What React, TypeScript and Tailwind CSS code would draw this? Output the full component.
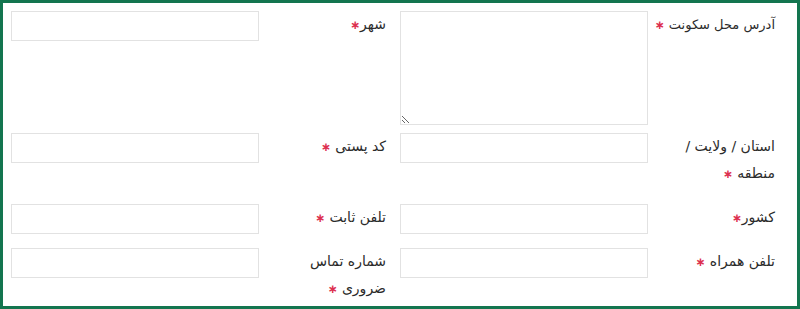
const Star = () => <span className="text-[12px] font-bold text-[#dc2f4f]">∗</span>;

function Field({
  label,
  tall,
}: {
  label: React.ReactNode;
  tall?: boolean;
}) {
  return (
    <div className="flex w-[389px] items-start">
      <label className="w-[141px] pr-[14px] text-[14px] leading-[27px] text-[#2b2b2b]">{label}</label>
      {tall ? (
        <textarea className="h-[114px] w-[248px] border border-[#e2e2e2] bg-white outline-none" />
      ) : (
        <input type="text" className="h-[30px] w-[248px] border border-[#e2e2e2] bg-white outline-none" />
      )}
    </div>
  );
}

export default function App() {
  return (
    <div
      dir="rtl"
      className="box-border h-[309px] w-[800px] border-[3px] border-[#13754f] bg-white px-2 pt-2"
      style={{ fontFamily: '"DejaVu Sans", sans-serif' }}
    >
      <div className="flex h-[122px]">
        <Field tall label={<span className="whitespace-nowrap text-[13px]">آدرس محل سکونت <Star /></span>} />
        <Field label={<>شهر<Star /></>} />
      </div>
      <div className="flex h-[71px]">
        <Field label={<>استان / ولایت /<br />منطقه <Star /></>} />
        <Field label={<>کد پستی <Star /></>} />
      </div>
      <div className="flex h-[44px]">
        <Field label={<>کشور<Star /></>} />
        <Field label={<>تلفن ثابت <Star /></>} />
      </div>
      <div className="flex">
        <Field label={<>تلفن همراه <Star /></>} />
        <Field label={<>شماره تماس<br />ضروری <Star /></>} />
      </div>
    </div>
  );
}
